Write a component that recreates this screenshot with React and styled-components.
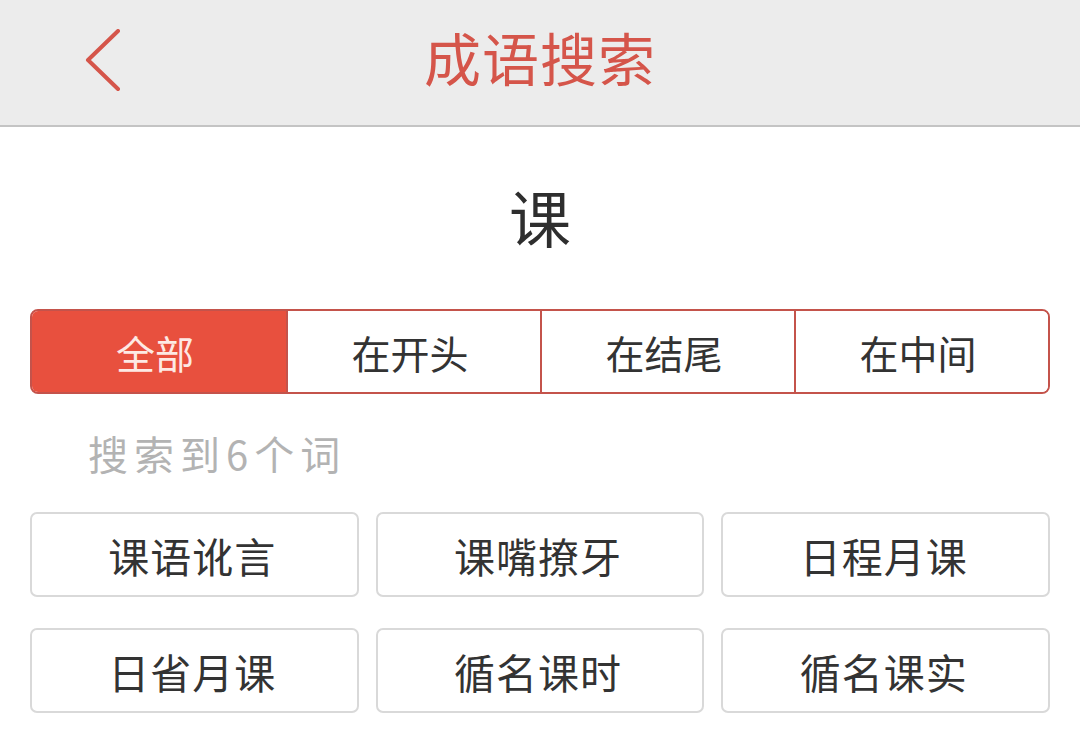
import React from "react";
import styled, { createGlobalStyle } from "styled-components";

const Global = createGlobalStyle`
  html, body { margin: 0; padding: 0; background: #ffffff; }
  body { font-family: "Noto Sans CJK SC", "Noto Sans", sans-serif; }
  * { box-sizing: border-box; }
`;

const Page = styled.div`
  width: 1080px;
  height: 734px;
  background: #ffffff;
  overflow: hidden;
`;

const Header = styled.header`
  height: 127px;
  background: #ececec;
  border-bottom: 2px solid #c4c4c4;
  display: grid;
  grid-template-columns: 200px 1fr 200px;
  align-items: center;
`;

const Back = styled.button`
  border: none;
  background: none;
  padding: 0 0 4px 84px;
  display: flex;
  align-items: center;
  height: 100%;
  cursor: pointer;
`;

const Title = styled.h1`
  margin: 0 0 14px 0;
  text-align: center;
  font-size: 57px;
  font-weight: 400;
  color: #d5554a;
  letter-spacing: 1px;
`;

const Content = styled.main`
  padding: 0 30px;
  display: flex;
  flex-direction: column;
`;

const Keyword = styled.div`
  text-align: center;
  font-size: 62px;
  color: #2e2e2e;
  line-height: 1;
  margin-top: 58px;
  height: 124px;
`;

const Segmented = styled.div`
  display: grid;
  grid-template-columns: repeat(4, 1fr);
  height: 85px;
  border: 2px solid #c4534b;
  border-radius: 8px;
  overflow: hidden;
`;

const Segment = styled.button`
  border: none;
  border-left: ${(p) => (p.$first ? "none" : "2px solid #c4534b")};
  background: ${(p) => (p.$active ? "#e8503e" : "#ffffff")};
  color: ${(p) => (p.$active ? "#fde9e4" : "#333333")};
  font-family: inherit;
  font-size: 39px;
  padding: 0 8px 0 0;
  display: flex;
  align-items: center;
  justify-content: center;
`;

const Count = styled.div`
  font-size: 40px;
  color: #b3b3b3;
  padding-left: 58px;
  margin-top: 30px;
  height: 88px;
  letter-spacing: 6px;
`;

const Grid = styled.div`
  display: grid;
  grid-template-columns: repeat(3, 1fr);
  column-gap: 17px;
  row-gap: 31px;
`;

const Word = styled.button`
  height: 85px;
  border: 2px solid #d9d9d9;
  border-radius: 7px;
  background: #ffffff;
  color: #333333;
  font-family: inherit;
  font-size: 41px;
  padding: 0 4px 0 0;
  display: flex;
  align-items: center;
  justify-content: center;
  letter-spacing: 1px;
`;

const tabs = ["全部", "在开头", "在结尾", "在中间"];
const words = ["课语讹言", "课嘴撩牙", "日程月课", "日省月课", "循名课时", "循名课实"];

export default function App() {
  return (
    <Page>
      <Global />
      <Header>
        <Back aria-label="返回">
          <svg width="40" height="64" viewBox="0 0 40 64">
            <polyline
              points="34,2 4,31 34,60"
              fill="none"
              stroke="#d5554a"
              strokeWidth="4"
              strokeLinecap="round"
              strokeLinejoin="round"
            />
          </svg>
        </Back>
        <Title>成语搜索</Title>
        <div />
      </Header>
      <Content>
        <Keyword>课</Keyword>
        <Segmented>
          {tabs.map((t, i) => (
            <Segment key={t} $first={i === 0} $active={i === 0}>
              {t}
            </Segment>
          ))}
        </Segmented>
        <Count>搜索到6个词</Count>
        <Grid>
          {words.map((w) => (
            <Word key={w}>{w}</Word>
          ))}
        </Grid>
      </Content>
    </Page>
  );
}
